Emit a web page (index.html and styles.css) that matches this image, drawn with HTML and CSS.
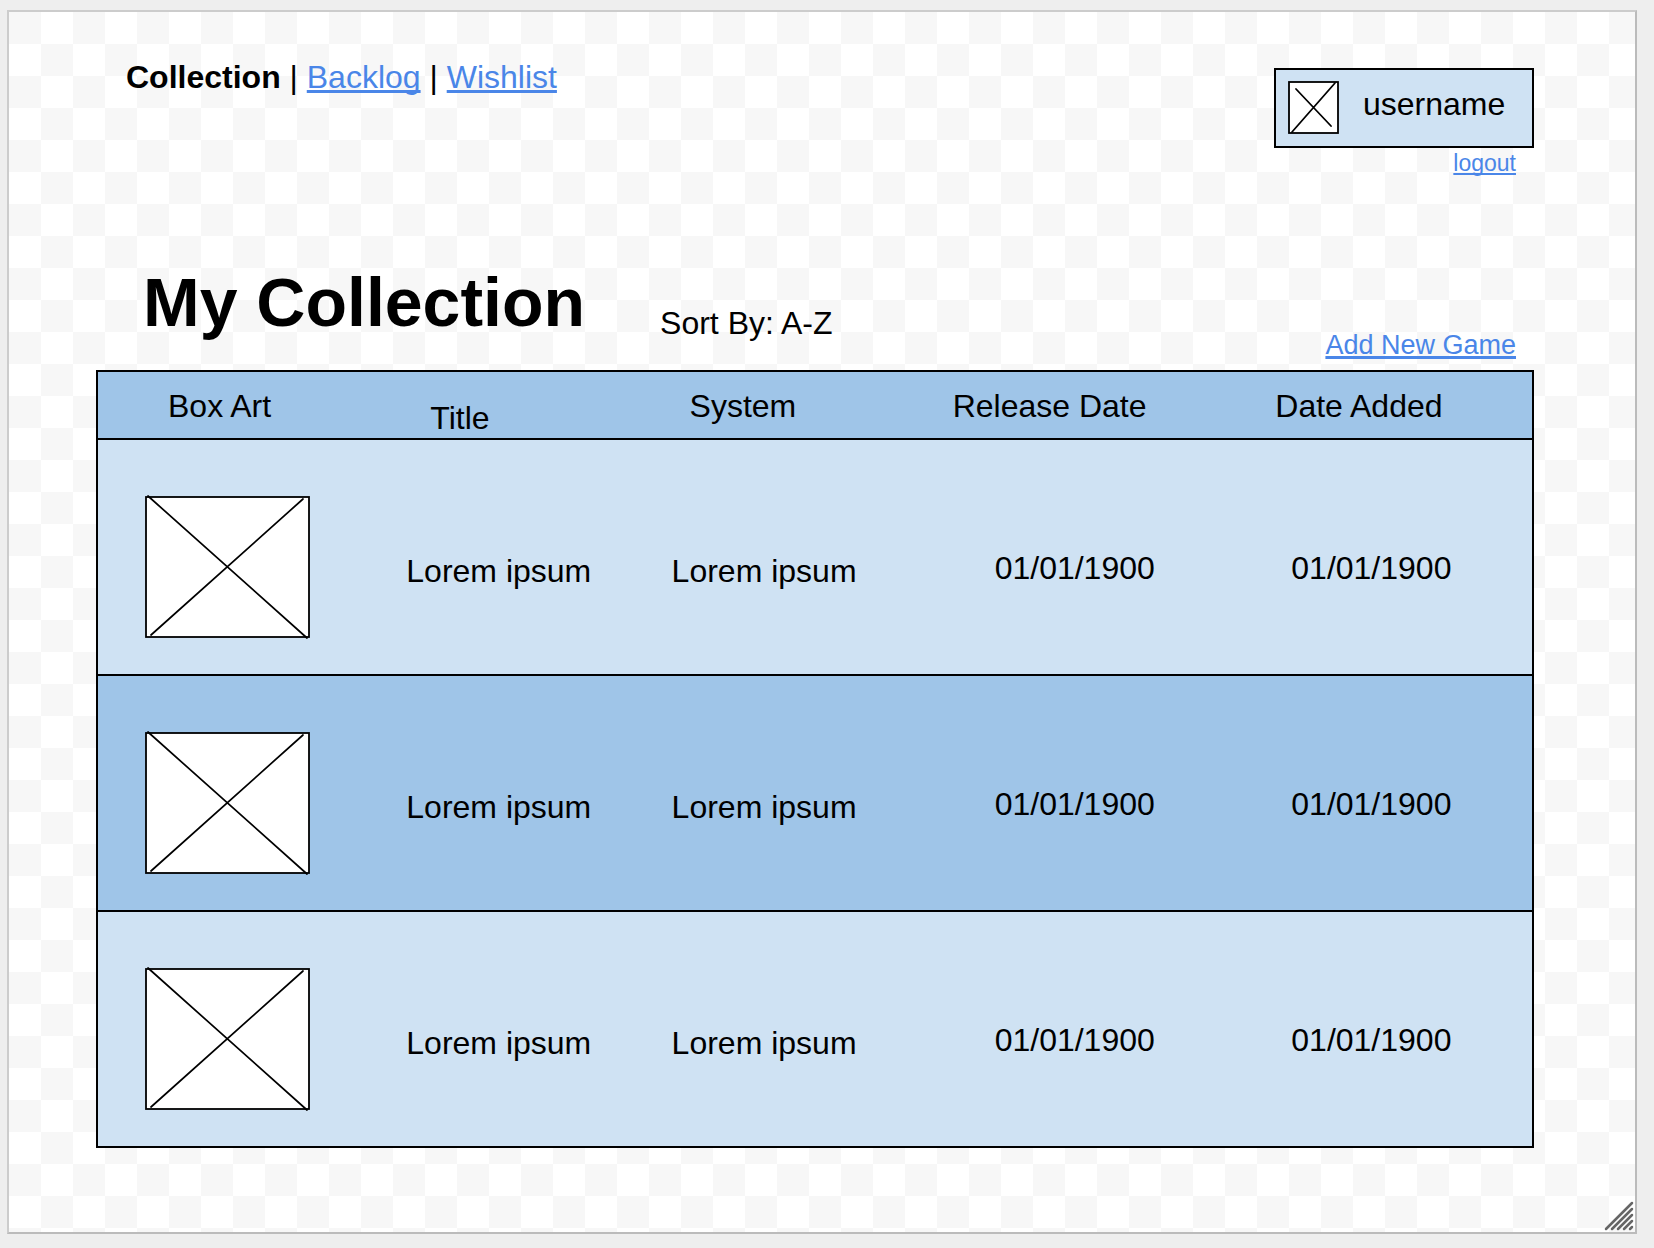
FILE: index.html
```html
<!DOCTYPE html>
<html lang="en">
<head>
<meta charset="utf-8">
<title>My Collection</title>
<link rel="stylesheet" href="styles.css">
</head>
<body>
<svg class="defs" aria-hidden="true">
  <symbol id="box-art" viewBox="0 0 165 142" overflow="visible">
    <rect x="1" y="1" width="163" height="140" fill="#fff" stroke="#000" stroke-width="1.8"/>
    <path d="M3 0 L162 142 M6 139 L158 3" fill="none" stroke="#000" stroke-width="1.7" stroke-linecap="round"/>
  </symbol>
</svg>
<div class="canvas">
  <header class="topbar">
    <nav class="nav"><strong>Collection</strong> | <a href="#backlog">Backlog</a> | <a href="#wishlist">Wishlist</a></nav>
    <div class="account">
      <div class="user">
        <svg class="avatar" viewBox="0 0 51 53" aria-hidden="true">
          <rect x="1" y="1" width="49" height="51" fill="#fff" stroke="#000" stroke-width="1.8"/>
          <path d="M8 8 L43 45 M4 51 L47 2" fill="none" stroke="#000" stroke-width="1.8" stroke-linecap="round"/>
        </svg>
        <span>username</span>
      </div>
      <a class="logout" href="#logout">logout</a>
    </div>
  </header>
  <main>
    <div class="heading">
      <h1>My Collection</h1>
      <p class="sort">Sort By: A-Z</p>
      <a class="add" href="#add">Add New Game</a>
    </div>
    <table class="games">
      <colgroup><col class="w-art"><col class="w-title"><col class="w-system"><col class="w-release"><col class="w-added"></colgroup>
      <thead>
        <tr><th class="art">Box Art</th><th class="title">Title</th><th class="system">System</th><th class="release">Release Date</th><th class="added">Date Added</th></tr>
      </thead>
      <tbody>
        <tr><td class="art"><svg class="cover" role="img" aria-label="Box art"><use href="#box-art"/></svg></td><td class="title">Lorem ipsum</td><td class="system">Lorem ipsum</td><td class="release">01/01/1900</td><td class="added">01/01/1900</td></tr>
        <tr><td class="art"><svg class="cover" role="img" aria-label="Box art"><use href="#box-art"/></svg></td><td class="title">Lorem ipsum</td><td class="system">Lorem ipsum</td><td class="release">01/01/1900</td><td class="added">01/01/1900</td></tr>
        <tr><td class="art"><svg class="cover" role="img" aria-label="Box art"><use href="#box-art"/></svg></td><td class="title">Lorem ipsum</td><td class="system">Lorem ipsum</td><td class="release">01/01/1900</td><td class="added">01/01/1900</td></tr>
      </tbody>
    </table>
  </main>
  <svg class="grip" viewBox="0 0 30 30" aria-hidden="true">
    <path d="M2 28 L28 2 M8 28 L28 8 M14 28 L28 14 M20 28 L28 20 M26 28 L28 26" fill="none" stroke="#666" stroke-width="2.5" stroke-linecap="round"/>
  </svg>
</div>
</body>
</html>
```
FILE: styles.css
```css
* {
  box-sizing: border-box;
}

body {
  display: flex;
  min-height: 100vh;
  margin: 0;
  padding: 10px 17px 14px 7px;
  background: #eee;
  color: #000;
  font: 32px/36px "Liberation Sans", Arial, sans-serif;
}

a {
  color: #4a86e8;
  text-decoration: underline 2px;
  text-decoration-skip-ink: none;
  text-underline-offset: 2px;
}

.defs {
  position: absolute;
  width: 0;
  height: 0;
}

.canvas {
  position: relative;
  flex: 1;
  padding: 0 101px 82px 87px;
  border: 2px solid;
  border-color: #ccc #bbb #bbb #ccc;
  background: repeating-conic-gradient(#fff 0 25%, #f7f7f7 0 50%) 0 0 / 64px 64px;
}

.topbar {
  display: flex;
  justify-content: space-between;
  padding: 47px 0 0 30px;
}

.account {
  display: flex;
  flex-direction: column;
  align-items: flex-end;
  padding-top: 9px;
}

.user {
  display: flex;
  align-items: center;
  gap: 24px;
  width: 260px;
  height: 80px;
  padding: 0 12px 2px;
  border: 2px solid #000;
  background: #cfe2f3;
}

.user span {
  padding-bottom: 6px;
}

.avatar {
  width: 51px;
  height: 53px;
}

.logout {
  margin-right: 18px;
  font-size: 23px;
  line-height: 30px;
}

.nav a,
.add {
  text-decoration-thickness: 3px;
}

.heading {
  display: flex;
  align-items: flex-end;
  padding: 86px 18px 10px 47px;
}

h1 {
  margin: 0 75px 20px 0;
  font-size: 68px;
  line-height: 76px;
}

.sort {
  margin: 0 0 19px;
}

.add {
  margin-left: auto;
  font-size: 27px;
  line-height: 30px;
}

.games {
  width: 100%;
  border: 2px solid #000;
  border-bottom: 0;
  border-spacing: 0;
  table-layout: fixed;
}

.w-art { width: 21.5%; }
.w-title { width: 18.5%; }
.w-system { width: 19.6%; }
.w-release { width: 22.5%; }
.w-added { width: 17.9%; }

th,
td {
  padding: 0;
  border-bottom: 2px solid #000;
  font-weight: normal;
  text-align: left;
  vertical-align: top;
}

th {
  height: 68px;
  padding-top: 16px;
}

td {
  height: 236px;
}

thead tr,
tbody tr:nth-child(even) {
  background: #9fc5e8;
}

tbody tr:nth-child(odd) {
  background: #cfe2f3;
}

th.art { padding-left: 70px; }
th.title { padding: 28px 0 0 24px; }
th.system { padding-left: 18px; }

td.art { padding: 56px 0 0 47px; }
td.title,
td.system { padding-top: 113px; }
td.release { padding: 110px 0 0 42px; }
td.added { padding: 110px 0 0 16px; }

.cover {
  display: block;
  width: 165px;
  height: 142px;
  overflow: visible;
}

.grip {
  position: absolute;
  right: 1px;
  bottom: 1px;
  width: 30px;
  height: 30px;
}
```
